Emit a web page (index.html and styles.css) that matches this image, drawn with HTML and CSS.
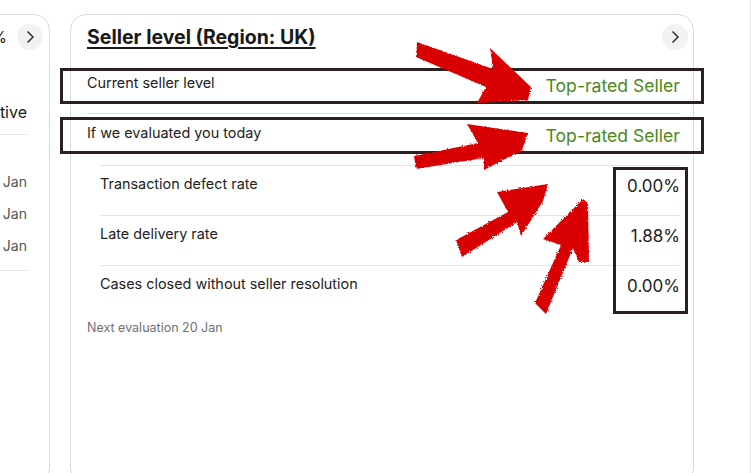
FILE: index.html
```html
<!DOCTYPE html>
<html lang="en">
<head>
<meta charset="utf-8">
<title>Seller level</title>
<link rel="stylesheet" href="styles.css">
</head>
<body>
<div class="page">
  <div class="cards">
    <section class="card card-left">
      <header class="card-head left-head">
        <h2 class="left-title">Feedback score 100%</h2>
        <button class="chev" aria-label="Open">
          <svg width="12" height="14" viewBox="0 0 12 14"><path d="M3.5 1.5 L9 7 L3.5 12.5" fill="none" stroke="#333" stroke-width="1.5"/></svg>
        </button>
      </header>
      <div class="left-row">Positive</div>
      <ul class="left-dates">
        <li>Updated 12 Jan</li>
        <li>Updated 13 Jan</li>
        <li>Updated 14 Jan</li>
      </ul>
    </section>

    <section class="card card-main">
      <header class="card-head main-head">
        <h2 class="main-title">Seller level (Region: UK)</h2>
        <button class="chev" aria-label="Open">
          <svg width="12" height="14" viewBox="0 0 12 14"><path d="M3.5 1.5 L9 7 L3.5 12.5" fill="none" stroke="#333" stroke-width="1.5"/></svg>
        </button>
      </header>
      <div class="row row-first">
        <span class="label">Current seller level</span>
        <span class="status">Top-rated Seller</span>
      </div>
      <div class="row row-second">
        <span class="label">If we evaluated you today</span>
        <span class="status">Top-rated Seller</span>
      </div>
      <ul class="metrics">
        <li class="metric"><span class="label">Transaction defect rate</span><span class="value">0.00%</span></li>
        <li class="metric"><span class="label">Late delivery rate</span><span class="value">1.88%</span></li>
        <li class="metric"><span class="label">Cases closed without seller resolution</span><span class="value">0.00%</span></li>
      </ul>
      <p class="next">Next evaluation 20 Jan</p>
    </section>
  </div>

  <div class="annot annot-row1"></div>
  <div class="annot annot-row2"></div>
  <div class="annot annot-values"></div>

  <svg class="arrows" width="751" height="473" viewBox="0 0 751 473">
    <defs>
      <filter id="rough" x="-5%" y="-5%" width="110%" height="110%">
        <feTurbulence type="fractalNoise" baseFrequency="0.8" numOctaves="2" result="n"/>
        <feDisplacementMap in="SourceGraphic" in2="n" scale="3"/>
      </filter>
    </defs>
    <g fill="#d80404" filter="url(#rough)">
      <path d="M417,42 L493,69 L490,48 L531,87 L528,100 L477,103 L486,87 L416,57 Z"/>
      <path d="M414,156 L478,143 L467,124 L528,133 L522,150 L484,170 L484,158 L416,169 Z"/>
      <path d="M456,240 L508,212 L497,192 L548,184 L543,201 L521,236 L517,222 L462,257 Z"/>
      <path d="M535,303 L561,245 L543,239 L583,199 L588,203 L589,262 L579,262 L573,248 L546,314 Z"/>
    </g>
  </svg>
</div>
</body>
</html>
```
FILE: styles.css
```css
* { box-sizing: border-box; }

html, body {
  margin: 0;
  padding: 0;
  background: #ffffff;
  overflow: hidden;
}

body {
  font-family: "Inter", "Liberation Sans", Arial, sans-serif;
  color: #191919;
}

.page {
  position: relative;
  width: 751px;
  height: 473px;
  overflow: hidden;
  border-right: 1px solid #e2e2e2;
}

.cards {
  display: flex;
  align-items: flex-start;
  padding-top: 14px;
}

.card {
  background: #fff;
  border: 1px solid #d9d9d9;
  border-radius: 16px;
  height: 470px;
  flex: none;
}

.card-head {
  display: flex;
  align-items: center;
  height: 28px;
  margin-top: 8px;
}

.chev {
  width: 26px;
  height: 26px;
  border-radius: 50%;
  border: 0;
  padding: 0;
  background: #f2f2f2;
  display: flex;
  align-items: center;
  justify-content: center;
  flex: none;
}

/* Left (clipped) card */
.card-left {
  width: 200px;
  margin-left: -150px;
  padding-right: 6px;
  text-align: right;
}

.left-head {
  justify-content: flex-end;
  gap: 10px;
}

.left-title {
  margin: 0;
  font-size: 16px;
  font-weight: 400;
  white-space: nowrap;
}

.left-row {
  margin: 51px 16px 0 0;
  padding-bottom: 12px;
  line-height: 20px;
  font-size: 16px;
  border-bottom: 1px solid #e2e2e2;
}

.left-dates {
  list-style: none;
  margin: 31px 16px 0 0;
  padding: 0 0 8px;
  border-bottom: 1px solid #e2e2e2;
}

.left-dates li {
  line-height: 32px;
  font-size: 14px;
  color: #555;
}

/* Main card */
.card-main {
  width: 624px;
  margin-left: 20px;
  padding: 0 13px 0 16px;
}

.main-head {
  justify-content: space-between;
  margin-right: -8px;
}

.main-title {
  margin: 0;
  font-size: 19.5px;
  font-weight: 700;
  text-decoration: underline;
  text-underline-offset: 3px;
  text-decoration-thickness: 2px;
}

.row {
  display: flex;
  justify-content: space-between;
  align-items: flex-start;
  line-height: 20px;
}

.row-first {
  margin-top: 13px;
  height: 50px;
  padding-top: 9px;
  border-bottom: 1px solid #e2e2e2;
}

.row-second {
  height: 51px;
  padding-top: 9px;
}

.label {
  font-size: 14.4px;
  line-height: 20px;
  color: #222;
}

.status {
  font-size: 17.6px;
  line-height: 20px;
  margin-top: 3px;
  color: #4c881c;
}

.metrics {
  list-style: none;
  margin: 0;
  padding: 0 0 0 13px;
}

.metric {
  display: flex;
  justify-content: space-between;
  align-items: flex-start;
  height: 50px;
  padding-top: 8px;
  border-top: 1px solid #e2e2e2;
}

.value {
  font-size: 17px;
  line-height: 20px;
  margin-top: 2px;
  color: #222;
}

.next {
  margin: 5px 0 0;
  font-size: 12.5px;
  line-height: 16px;
  color: #707070;
}

/* Annotations drawn over the screenshot */
.annot {
  position: absolute;
  border: 3px solid #2b2020;
}

.annot-row1 { left: 60px; top: 68px; width: 644px; height: 36px; }
.annot-row2 { left: 60px; top: 117px; width: 644px; height: 37px; }
.annot-values { left: 613px; top: 167px; width: 75px; height: 147px; }

.arrows {
  position: absolute;
  left: 0;
  top: 0;
  pointer-events: none;
}
```
